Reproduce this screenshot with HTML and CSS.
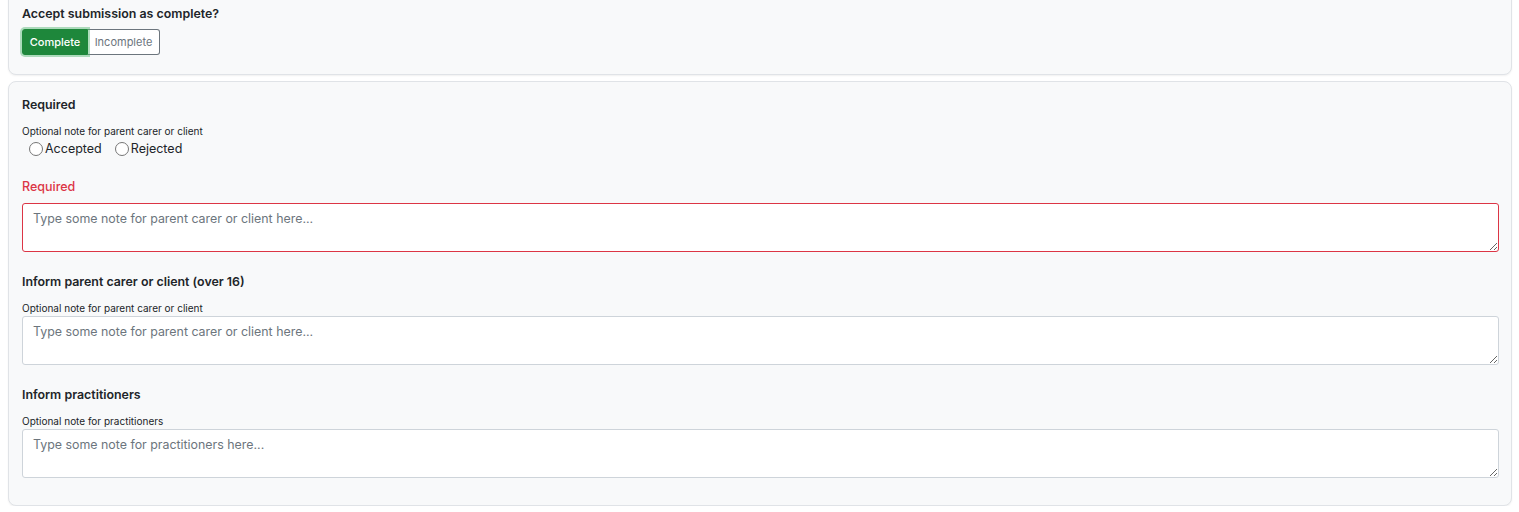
FILE: index.html
```html
<!DOCTYPE html>
<html lang="en">
<head>
<meta charset="utf-8">
<title>Submission review</title>
<link rel="stylesheet" href="styles.css">
</head>
<body>
<div class="page">
  <section class="card card-top">
    <h3 class="title">Accept submission as complete?</h3>
    <div class="btn-group">
      <button class="btn btn-complete">Complete</button>
      <button class="btn btn-incomplete">Incomplete</button>
    </div>
  </section>

  <section class="card card-main">
    <h3 class="title">Required</h3>
    <div class="hint">Optional note for parent carer or client</div>
    <div class="radios">
      <label class="radio"><span class="circle"></span>Accepted</label>
      <label class="radio"><span class="circle"></span>Rejected</label>
    </div>

    <div class="error">Required</div>
    <textarea class="note note-error" placeholder="Type some note for parent carer or client here..."></textarea>

    <h3 class="title title-gap">Inform parent carer or client (over 16)</h3>
    <div class="hint">Optional note for parent carer or client</div>
    <textarea class="note" placeholder="Type some note for parent carer or client here..."></textarea>

    <h3 class="title title-gap">Inform practitioners</h3>
    <div class="hint">Optional note for practitioners</div>
    <textarea class="note" placeholder="Type some note for practitioners here..."></textarea>
  </section>
</div>
</body>
</html>
```

FILE: styles.css
```css
* { box-sizing: border-box; }

html, body {
  margin: 0;
  padding: 0;
  background: #ffffff;
}

body {
  font-family: "Inter", "Noto Sans", "Liberation Sans", sans-serif;
  color: #212529;
}

.page {
  padding: 0 7px 0 8px;
  display: flex;
  flex-direction: column;
  gap: 6px;
}

.card {
  background: #f8f9fa;
  border: 1px solid #e0e3e7;
  border-radius: 8px;
  box-shadow: 0 1px 2px rgba(0, 0, 0, 0.06);
  padding: 0 12px 0 13px;
}

.card-top {
  margin-top: -10px;
  padding-top: 15px;
  padding-bottom: 19px;
}

.card-main {
  padding-top: 15px;
  padding-bottom: 27px;
}

.title {
  margin: 0;
  font-size: 12.4px;
  font-weight: 600;
  line-height: 16px;
  color: #212529;
}

.title-gap {
  margin-top: 22px;
}

.btn-group {
  display: flex;
  margin-top: 7px;
}

.btn {
  font-family: inherit;
  font-size: 11px;
  line-height: 14px;
  height: 26px;
  padding: 0 6px;
  margin: 0;
  cursor: pointer;
}

.btn-complete {
  background: #1e873b;
  color: #ffffff;
  font-weight: 500;
  border: 1px solid #1e873b;
  border-radius: 3px 0 0 3px;
  width: 66px;
  box-shadow: 0 0 0 2px rgba(80, 180, 110, 0.45);
  position: relative;
  z-index: 1;
}

.btn-incomplete {
  background: #ffffff;
  color: #6c757d;
  border: 1px solid #6c757d;
  border-left: none;
  border-radius: 0 3px 3px 0;
  width: 72px;
}

.hint {
  margin-top: 12px;
  font-size: 10px;
  line-height: 12px;
  color: #212529;
}

.radios {
  display: flex;
  gap: 13px;
  padding-left: 7px;
  margin-top: 3px;
}

.radio {
  display: flex;
  align-items: center;
  gap: 2px;
  font-size: 12.5px;
  line-height: 17px;
  color: #212529;
}

.circle {
  width: 14px;
  height: 14px;
  border: 1px solid #767676;
  border-radius: 50%;
  background: #ffffff;
}

.error {
  margin-top: 22px;
  font-size: 12.5px;
  font-weight: 500;
  line-height: 16px;
  color: #dc3545;
}

.note {
  display: block;
  width: 100%;
  height: 49px;
  margin-top: 2px;
  padding: 7px 10px;
  font-family: inherit;
  font-size: 12.4px;
  line-height: 16px;
  background: #ffffff;
  border: 1px solid #ced4da;
  border-radius: 3px;
  resize: vertical;
  color: #212529;
}

.note::placeholder {
  color: #6c757d;
}

.note-error {
  border-color: #dc3545;
  margin-top: 8px;
}
```
